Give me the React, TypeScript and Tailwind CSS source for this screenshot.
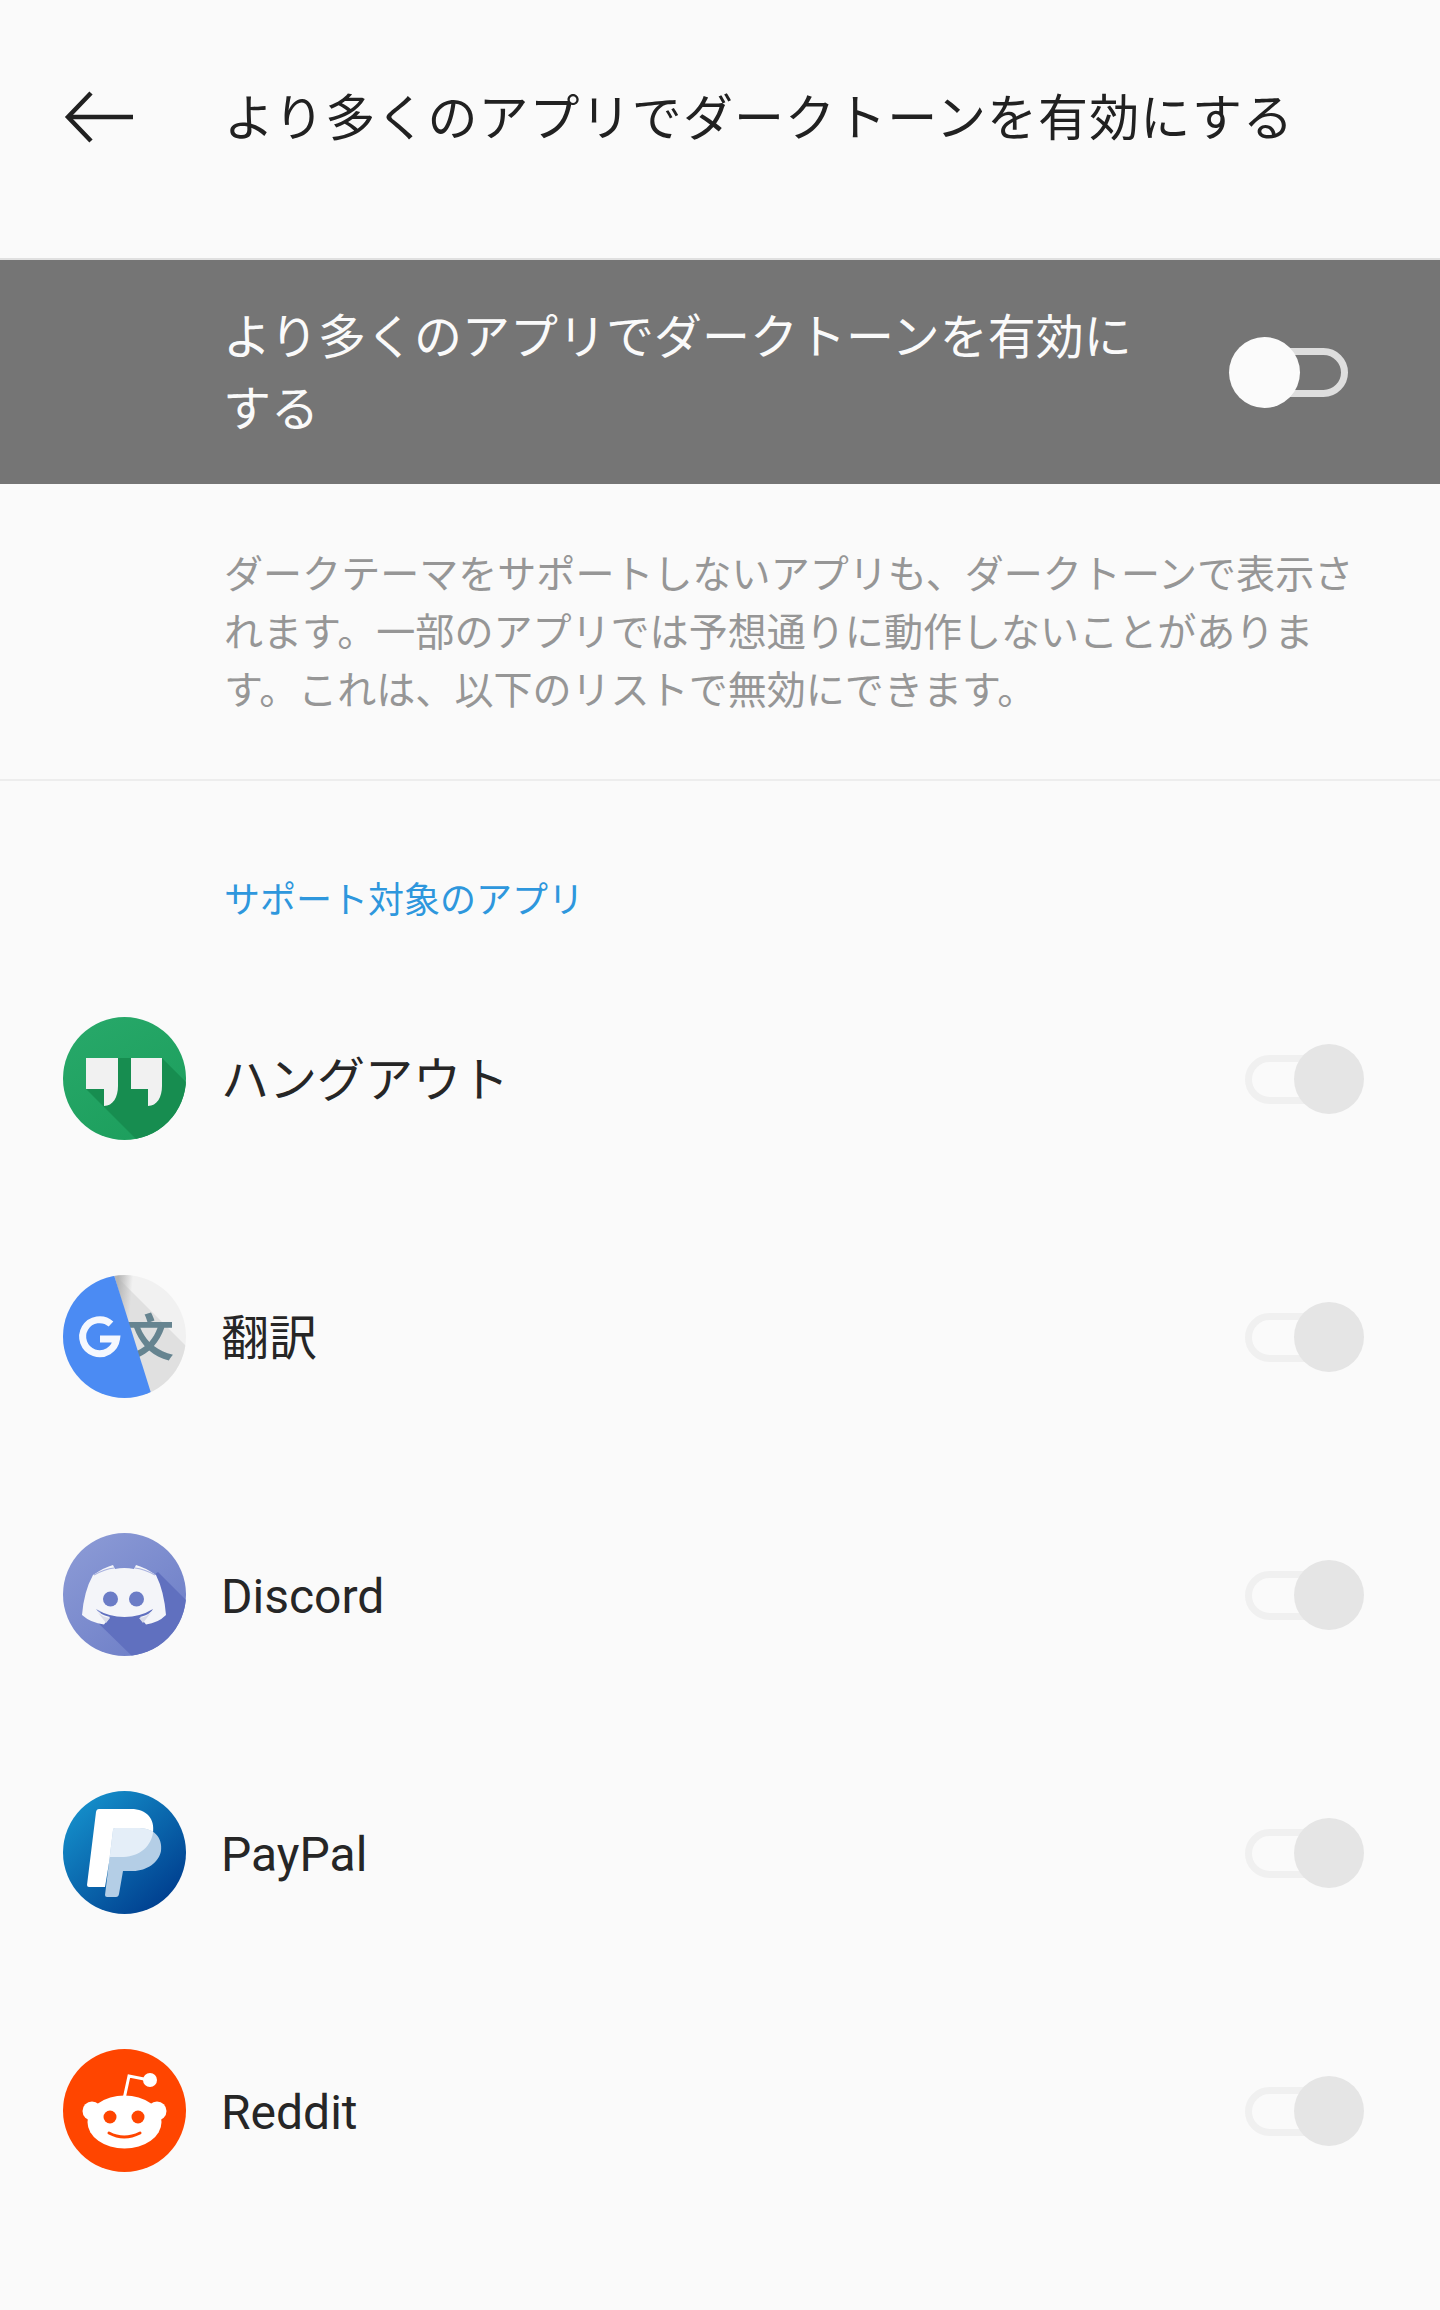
import React from 'react';

const jp = "font-['Roboto','Noto_Sans_CJK_JP',sans-serif]";

function BackArrow() {
  return (
    <svg width="70" height="52" viewBox="0 0 70 52" fill="none" stroke="#212121" strokeWidth="4.5">
      <path d="M69 26H5" />
      <path d="M27 2L4 26l23 24" />
    </svg>
  );
}

function Hangouts() {
  return (
    <svg width="123" height="123" viewBox="0 0 123 123">
      <defs>
        <clipPath id="hg-clip"><circle cx="61.5" cy="61.5" r="61.5" /></clipPath>
        <linearGradient id="hg-bg" x1="0.2" y1="0" x2="0.8" y2="1">
          <stop offset="0" stopColor="#27a869" />
          <stop offset="1" stopColor="#1c9e5c" />
        </linearGradient>
      </defs>
      <g clipPath="url(#hg-clip)">
        <rect width="123" height="123" fill="url(#hg-bg)" />
        <path d="M23 72L75 124H124V66L99 41H23Z" fill="#178d50" />
      </g>
      <path d="M23 41H55V69C55 80 50 89 41 89V72H23Z" fill="#f1f1f1" />
      <path d="M68 41H99V69C99 80 94 89 85 89V72H68Z" fill="#f1f1f1" />
    </svg>
  );
}

function Translate() {
  return (
    <svg width="123" height="123" viewBox="0 0 123 123">
      <defs>
        <clipPath id="tr-clip"><circle cx="61.5" cy="61.5" r="61.5" /></clipPath>
        <linearGradient id="tr-edge" x1="0" y1="0.4" x2="1" y2="0.55">
          <stop offset="0" stopColor="#b5b5b5" />
          <stop offset="0.2" stopColor="#b5b5b5" stopOpacity="0" />
        </linearGradient>
      </defs>
      <g clipPath="url(#tr-clip)">
        <rect width="123" height="123" fill="#f1f1f1" />
        <path d="M52 0L124 72V124H80Z" fill="#e0e0e0" />
        <path d="M51 0H100L124 124H88Z" fill="url(#tr-edge)" />
        <text x="86" y="81" textAnchor="middle" fontSize="50" fontFamily="'Noto Sans CJK SC',sans-serif" fontWeight="700" fill="#668490">文</text>
        <path d="M51 0L88 118L88 124H-1V-1Z" fill="#4b8bf3" />
      </g>
      <path d="M48 49A17 17 0 1 0 53.5 64H37" fill="none" stroke="#f5f8fe" strokeWidth="7" />
    </svg>
  );
}

function Discord() {
  return (
    <svg width="123" height="123" viewBox="0 0 123 123">
      <defs>
        <clipPath id="dc-clip"><circle cx="61.5" cy="61.5" r="61.5" /></clipPath>
        <linearGradient id="dc-bg" x1="0.1" y1="0" x2="0.9" y2="1">
          <stop offset="0" stopColor="#8c9bd6" />
          <stop offset="1" stopColor="#6b7cc6" />
        </linearGradient>
      </defs>
      <g clipPath="url(#dc-clip)">
        <rect width="123" height="123" fill="url(#dc-bg)" />
        <path d="M95 39L124 68V124H70L30 85Z" fill="#6070bf" />
      </g>
      <path
        d="M30 42Q42 34 50 32L52 36Q61 34 71 36L73 32Q81 34 93 42Q101 58 103 82Q95 90 83 91.5L77 84Q88 81 90 76Q77 84 61.5 84Q46 84 33 76Q36 81 47 84L41 91.5Q28 90 19 82Q21 58 30 42Z"
        fill="#f4f5f9"
      />
      <path d="M31 42Q42 36 51 35M92 42Q81 36 72 35" fill="none" stroke="#a9b2df" strokeWidth="1.2" />
      <path d="M33 77Q38 84 47 85L43 90M90 77Q85 84 76 85L80 90" fill="#d9dbe8" />
      <circle cx="47.5" cy="66" r="7.5" fill="#6b7cc6" />
      <circle cx="73.5" cy="66" r="7.5" fill="#6b7cc6" />
    </svg>
  );
}

function PayPal() {
  const back = 'M36 18H68C84 18 92 28 90 42C87 58 74 66 58 66H47L42 96H26Q24 96 24 94L33 21Q33.5 18 36 18Z';
  const front = 'M52 37H76C90 37 100 46 98 60C96 71 84 80 70 80H60L56 103Q55.5 106 53 106H44Q42 106 42 104L50 39Q50 37 52 37Z';
  return (
    <svg width="123" height="123" viewBox="0 0 123 123">
      <defs>
        <linearGradient id="pp-bg" x1="0.15" y1="0.1" x2="0.85" y2="0.9">
          <stop offset="0" stopColor="#148dc9" />
          <stop offset="1" stopColor="#003f8f" />
        </linearGradient>
        <clipPath id="pp-back"><path d={back} /></clipPath>
      </defs>
      <circle cx="61.5" cy="61.5" r="61.5" fill="url(#pp-bg)" />
      <path d={back} fill="#ffffff" />
      <path d={front} fill="#b4cee6" />
      <path d={front} fill="#e4eef8" clipPath="url(#pp-back)" />
    </svg>
  );
}

function Reddit() {
  return (
    <svg width="123" height="123" viewBox="0 0 123 123">
      <circle cx="61.5" cy="61.5" r="61.5" fill="#ff4500" />
      <path d="M61 50L66 27L86 31" fill="none" stroke="#fff" strokeWidth="3" />
      <circle cx="87" cy="31" r="7" fill="#fff" />
      <circle cx="29" cy="62" r="9.5" fill="#fff" />
      <circle cx="94" cy="62" r="9.5" fill="#fff" />
      <ellipse cx="61.5" cy="73" rx="37" ry="26.5" fill="#fff" />
      <circle cx="47" cy="68" r="6.5" fill="#ff4500" />
      <circle cx="75" cy="68" r="6.5" fill="#ff4500" />
      <path d="M46 84Q61 92 77 84" fill="none" stroke="#ff4500" strokeWidth="3" strokeLinecap="round" />
    </svg>
  );
}

function MasterToggle() {
  return (
    <div className="relative w-[119px] h-[71px] shrink-0">
      <div className="absolute left-[12px] right-0 top-[11px] h-[49px] rounded-full border-[7px] border-[#dedede]" />
      <div className="absolute left-0 top-0 w-[71px] h-[71px] rounded-full bg-[#fbfbfb]" />
    </div>
  );
}

function RowToggle() {
  return (
    <div className="relative w-[119px] h-[70px] shrink-0">
      <div className="absolute left-0 right-[12px] top-[11px] h-[49px] rounded-full border-[7px] border-[#f0f0f0]" />
      <div className="absolute right-0 top-0 w-[70px] h-[70px] rounded-full bg-[#e5e5e5]" />
    </div>
  );
}

const apps = [
  { name: 'ハングアウト', icon: <Hangouts /> },
  { name: '翻訳', icon: <Translate /> },
  { name: 'Discord', icon: <Discord /> },
  { name: 'PayPal', icon: <PayPal /> },
  { name: 'Reddit', icon: <Reddit /> },
];

export default function App() {
  return (
    <div className={`min-h-[2310px] w-[1440px] bg-[#fafafa] ${jp}`}>
      {/* Header */}
      <div className="h-[258px] flex items-center pl-[64px] pb-[21px]">
        <div className="w-[160px] shrink-0 mb-[4px]"><BackArrow /></div>
        <h1 className="text-[50px] tracking-[1.1px] leading-none font-normal text-[#212121] whitespace-nowrap">
          より多くのアプリでダークトーンを有効にする
        </h1>
      </div>

      {/* Master switch */}
      <div className="h-[226px] border-t-2 border-[#e0e0e0] bg-[#757575] flex items-center pl-[223px] pr-[92px]">
        <div className="w-[930px] pt-[3px] text-[48px] leading-[72px] text-[#fafafa]">
          より多くのアプリでダークトーンを有効にする
        </div>
        <div className="ml-auto"><MasterToggle /></div>
      </div>

      {/* Description */}
      <div className="h-[297px] pl-[224px] pt-[62px] border-b-2 border-[#ededed]">
        <p className="w-[1160px] text-[39.05px] leading-[58px] text-[#969696]">
          ダークテーマをサポートしないアプリも、ダークトーンで表示されます。一部のアプリでは予想通りに動作しないことがあります。これは、以下のリストで無効にできます。
        </p>
      </div>

      {/* App list */}
      <div className="pl-[224px] pt-[94px] h-[169px] text-[36px] leading-[52px] text-[#2e97dd]">
        サポート対象のアプリ
      </div>
      <div className="flex flex-col">
        {apps.map((app) => (
          <div key={app.name} className="h-[258px] flex items-center pl-[63px] pr-[76px]">
            <div className="mb-[2px]">{app.icon}</div>
            <span className="ml-[35px] pt-[4px] text-[48px] leading-none text-[#262626]">{app.name}</span>
            <div className="ml-auto"><RowToggle /></div>
          </div>
        ))}
      </div>
    </div>
  );
}
